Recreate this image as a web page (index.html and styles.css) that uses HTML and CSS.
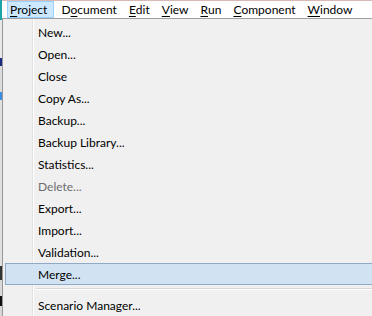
FILE: index.html
```html
<!DOCTYPE html>
<html lang="en">
<head>
  <meta charset="UTF-8" />
  <title>Project menu</title>
  <link rel="stylesheet" href="styles.css">
</head>
<body>
  <div class="backdrop"></div>
  <div class="app">
    <div class="menubar">
      <div class="top-item open"><u>P</u>roject</div>
      <div class="top-item">D<u>o</u>cument</div>
      <div class="top-item"><u>E</u>dit</div>
      <div class="top-item"><u>V</u>iew</div>
      <div class="top-item"><u>R</u>un</div>
      <div class="top-item"><u>C</u>omponent</div>
      <div class="top-item"><u>W</u>indow</div>
    </div>

    <div class="dropdown">
      <div class="item">New...</div>
      <div class="item">Open...</div>
      <div class="item">Close</div>
      <div class="item">Copy As...</div>
      <div class="item">Backup...</div>
      <div class="item">Backup Library...</div>
      <div class="item">Statistics...</div>
      <div class="item disabled">Delete...</div>
      <div class="item">Export...</div>
      <div class="item">Import...</div>
      <div class="item">Validation...</div>
      <div class="item hover">Merge...</div>
      <div class="separator"></div>
      <div class="item">Scenario Manager...</div>
    </div>
  </div>
</body>
</html>
```

FILE: styles.css
```css
body {
  margin: 0;
  height: 316px;
  overflow: hidden;
  display: flex;
  font-family: Lato, "Noto Sans", sans-serif;
  font-size: 12px;
  color: #000;
  background: #f0f0f0;
}

/* sliver of the window behind the menu */
.backdrop {
  width: 2px;
  flex: none;
  background: linear-gradient(to bottom,
    #1aa6a6 0, #1aa6a6 20px,
    #e8e8e8 20px, #e8e8e8 58px,
    #1c2a80 58px, #1c2a80 66px,
    #dcdcdc 66px, #dcdcdc 92px,
    #3b8fe0 92px, #3b8fe0 100px,
    #e0e0e0 100px, #e0e0e0 266px,
    #333 266px, #333 280px,
    #d8d8d8 280px, #d8d8d8 296px,
    #111 296px, #111 306px,
    #d8d8d8 306px);
}

.app {
  flex: 1;
  min-width: 0;
  display: flex;
  flex-direction: column;
}

.menubar {
  height: 21px;
  box-sizing: border-box;
  display: flex;
  gap: 4px;
  padding-left: 5px;
  background: #fff;
  border-top: 1px solid #d9b8b8;
  border-bottom: 1px solid #a0a0a0;
}

.top-item {
  display: flex;
  align-items: center;
  padding: 0 4px 0 2px;
  border: 1px solid transparent;
  white-space: nowrap;
}

.top-item u {
  text-underline-offset: 2px;
}

.top-item.open {
  background: #cce8ff;
  border-color: #99d1ff;
  padding-right: 6px;
}

.dropdown {
  flex: 1;
  border-left: 1px solid #979797;
  padding: 2px 0 0 2px;
  background: linear-gradient(to right,
    #f0f0f0 0, #f0f0f0 29px,
    #e2e2e2 29px, #e2e2e2 30px,
    #fff 30px, #fff 31px,
    #f0f0f0 31px);
}

.item {
  height: 22px;
  box-sizing: border-box;
  display: flex;
  align-items: center;
  padding-left: 32px;
  border: 1px solid transparent;
  border-right: none;
}

.item.disabled {
  color: #6d6d6d;
}

.item.hover {
  background: #d1e2f2;
  border-color: #8fa9c9;
}

.separator {
  height: 1px;
  margin: 3px 0 4px 31px;
  background: #d7d7d7;
  border-bottom: 1px solid #fff;
}
```
